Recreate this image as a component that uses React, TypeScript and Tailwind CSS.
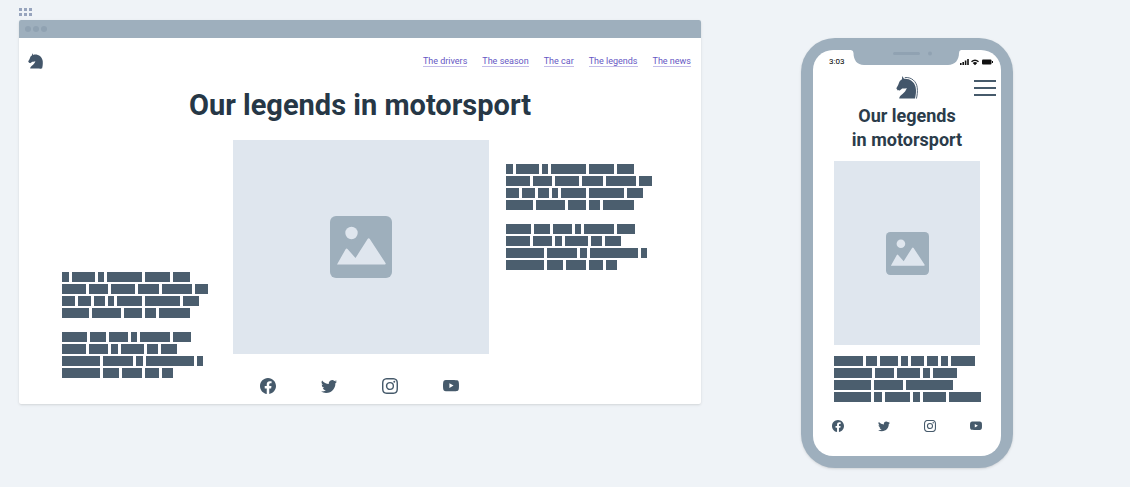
import React from "react";
import { BsFacebook, BsInstagram, BsTwitter, BsYoutube } from "react-icons/bs";

type Lines = number[][];

const introLines: Lines = [
  [7, 23, 6, 35, 25, 17],
  [24, 19, 24, 21, 30, 13],
  [13, 13, 11, 6, 25, 35, 16],
  [27, 29, 18, 11, 31],
];

const detailLines: Lines = [
  [25, 16, 19, 6, 30, 18],
  [24, 19, 7, 23, 11, 16],
  [38, 30, 7, 48, 6],
  [38, 16, 20, 14, 11],
];

const mobileLines: Lines = [
  [29, 11, 18, 7, 13, 11, 7, 24],
  [38, 19, 23, 7, 24],
  [37, 29, 47],
  [37, 8, 25, 7, 23, 32],
];

const links = ["The drivers", "The season", "The car", "The legends", "The news"];

const socials = [
  { name: "Facebook", Icon: BsFacebook },
  { name: "Twitter", Icon: BsTwitter },
  { name: "Instagram", Icon: BsInstagram },
  { name: "YouTube", Icon: BsYoutube },
];

function Paragraph({ lines }: { lines: Lines }) {
  return (
    <div className="flex flex-col gap-[2px]">
      {lines.map((words, i) => (
        <div key={i} className="flex gap-[3px]">
          {words.map((w, j) => (
            <span key={j} className="h-[10px] shrink-0 bg-[#4b5e6e]" style={{ width: w }} />
          ))}
        </div>
      ))}
    </div>
  );
}

function Article() {
  return (
    <div className="flex w-[147px] flex-col gap-[14px]">
      <Paragraph lines={introLines} />
      <Paragraph lines={detailLines} />
    </div>
  );
}

function Horse({ className, mane = false }: { className: string; mane?: boolean }) {
  return (
    <svg viewBox="0 0 22 23" className={className} aria-hidden="true">
      <path
        fill="#43566a"
        d="M6.2 0 L8 2.8 C13.5 2.4 18.4 5.6 19.6 11 C20.5 15.3 19.8 19 19 22.6 L3.2 22.6 C3.4 18.8 9.4 17.4 10.8 12 C9.4 12.8 7.6 12.6 6.2 12.6 L3.4 14.8 L3 14 L1.8 14.6 L0.3 12.2 C1.3 10.4 2.4 9.2 3 6.8 C3.4 5.2 4.6 4 6 3.2 Z"
      />
      {mane ? (
        <path
          fill="none"
          stroke="#43566a"
          strokeWidth="0.9"
          d="M8.8 1.6 C15.4 0.8 20.4 5.4 21.2 11.4 C21.7 15.6 21.2 19.4 20.4 22.6"
        />
      ) : (
        <path
          fill="#43566a"
          d="M8 2 C15 0.8 20.8 5 21.6 11.4 C22 16 21.4 19.6 20.6 22.6 L17 22.6 L17 8 Z"
        />
      )}
    </svg>
  );
}

function Picture({ className }: { className: string }) {
  return (
    <svg viewBox="0 0 62 62" className={className} role="img" aria-label="Picture">
      <rect width="62" height="62" rx="6" fill="#9eafbc" />
      <circle cx="21.5" cy="17" r="6.2" fill="#dfe6ee" />
      <path
        fill="#dfe6ee"
        d="M7 48.5 L15.6 33.2 Q16.5 31.8 17.5 33 L25.5 42 L37.6 23 Q38.7 21.4 39.8 23 L55.5 47 Q56.2 48.5 54.8 48.5 Z"
      />
    </svg>
  );
}

function Socials({ className, icon }: { className: string; icon: string }) {
  return (
    <div className={className}>
      {socials.map(({ name, Icon }) => (
        <a key={name} href="#" aria-label={name} className="text-[#465a6b]">
          <Icon className={icon} />
        </a>
      ))}
    </div>
  );
}

function Browser() {
  return (
    <section className="min-w-0 flex-1">
      <div className="grid h-3 w-[13px] grid-cols-3 content-start gap-[2px]">
        {[0, 1, 2, 3, 4, 5].map((i) => (
          <span key={i} className="size-[3px] bg-[#97a4bd]" />
        ))}
      </div>
      <div className="overflow-hidden rounded-[2px] bg-white pb-[10px] shadow-sm">
        <div className="flex h-[18px] items-center gap-[2px] bg-[#9eafbd] px-[6px]">
          <span className="size-[6px] rounded-full bg-[#90a2b2]" />
          <span className="size-[6px] rounded-full bg-[#90a2b2]" />
          <span className="size-[6px] rounded-full bg-[#90a2b2]" />
        </div>
        <header className="flex h-[46px] items-center justify-between pr-[10px] pl-[9px]">
          <Horse className="h-4 w-[15px]" />
          <nav className="flex gap-[15px] pt-[2px]">
            {links.map((link) => (
              <a
                key={link}
                href="#"
                className="border-b border-[#c3bce8] text-[9px] leading-[9px] text-[#6657c4]"
              >
                {link}
              </a>
            ))}
          </nav>
        </header>
        <h1 className="h-14 text-center text-[29px] leading-[42px] font-bold text-[#263746]">
          Our legends in motorsport
        </h1>
        <div className="grid grid-cols-[1fr_256px_1fr] pl-[2px]">
          <div className="flex items-end justify-end pr-6">
            <div className="-mb-6">
              <Article />
            </div>
          </div>
          <div className="flex h-[214px] items-center justify-center bg-[#dfe6ee]">
            <Picture className="size-[62px]" />
          </div>
          <div className="pt-6 pl-[17px]">
            <Article />
          </div>
        </div>
        <Socials className="mt-6 flex justify-center gap-[45px] pr-[2px]" icon="size-4" />
      </div>
    </section>
  );
}

function StatusIcons() {
  return (
    <svg viewBox="0 0 34 8" className="h-2 w-[34px]" aria-hidden="true">
      <path fill="#111" d="M1 5h1.6v2H1zM3.4 4H5v3H3.4zM5.8 2.5h1.6V7H5.8zM8.2 1h1.6v6H8.2z" />
      <path
        fill="#111"
        d="M12 3.2Q16 -0.4 20 3.2L19 4.2Q16 1.6 13 4.2ZM13.7 4.9Q16 3 18.3 4.9L16 7.2Z"
      />
      <rect x="23" y="1.5" width="9.5" height="5" rx="1" fill="#111" />
      <rect x="33" y="3" width="1" height="2" fill="#111" />
    </svg>
  );
}

function Phone() {
  return (
    <section className="mt-[30px] w-[212px] shrink-0 rounded-[34px] bg-[#9eafbd] p-3 shadow-sm">
      <div className="relative rounded-[20px] bg-white pb-6">
        <svg
          viewBox="0 0 110 15"
          className="absolute top-0 left-[38px] h-[15px] w-[110px]"
          aria-hidden="true"
        >
          <path
            fill="#9eafbd"
            d="M0 0H110Q108 0.5 108 3C108 10 104 15 97 15H13C6 15 2.5 10 2.5 3Q2.5 0.5 0 0Z"
          />
          <rect x="42" y="2" width="27" height="3" rx="1.5" fill="#90a2b2" />
          <circle cx="79" cy="3.5" r="2" fill="#90a2b2" />
        </svg>
        <div className="flex h-6 items-center justify-between pr-2 pl-4">
          <span className="text-[8px] leading-3 text-black">3:03</span>
          <StatusIcons />
        </div>
        <header className="grid grid-cols-[1fr_auto_1fr] items-center px-[5px] pt-[2px]">
          <span />
          <Horse className="h-[23px] w-[22px]" mane />
          <button type="button" aria-label="Menu" className="flex flex-col gap-[5px] justify-self-end">
            <span className="h-[2px] w-[22px] bg-[#465a6b]" />
            <span className="h-[2px] w-[22px] bg-[#465a6b]" />
            <span className="h-[2px] w-[22px] bg-[#465a6b]" />
          </button>
        </header>
        <h2 className="pt-[5px] text-center text-[18px] leading-6 font-bold text-[#2b3c4a]">
          Our legends
          <br />
          in motorsport
        </h2>
        <div className="mx-[21px] mt-[9px] flex h-[184px] items-center justify-center bg-[#dfe6ee]">
          <Picture className="size-[43px]" />
        </div>
        <div className="mt-[11px] pl-[21px]">
          <Paragraph lines={mobileLines} />
        </div>
        <Socials className="mt-[18px] flex justify-center gap-[34px]" icon="size-3" />
      </div>
    </section>
  );
}

export default function App() {
  return (
    <main className="flex min-h-screen items-start gap-[100px] bg-[#eff3f7] pt-2 pr-[117px] pb-[19px] pl-[19px] font-['Roboto','Liberation_Sans',sans-serif]">
      <Browser />
      <Phone />
    </main>
  );
}
